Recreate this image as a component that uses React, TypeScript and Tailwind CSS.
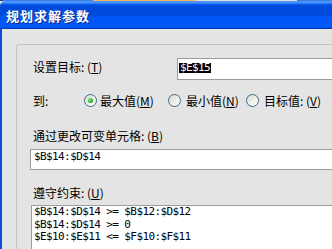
import type { ReactNode } from 'react';

const cjk = "font-['Noto_Sans_CJK_SC','Liberation_Sans',sans-serif] text-[12px] leading-[14px] text-black";
const mono = "font-['DejaVu_Sans_Mono','Liberation_Mono',monospace] text-[11px] tracking-[-0.6px] text-black";

function Key({ k }: { k: string }) {
  return (
    <span>
      (<span className="underline underline-offset-1">{k}</span>)
    </span>
  );
}

function Radio({ checked }: { checked?: boolean }) {
  return (
    <span className="mb-[2px] flex h-[13px] w-[13px] shrink-0 items-center justify-center rounded-full border border-[#3d6a8f] bg-[linear-gradient(135deg,#d6d6d0_0%,#f0f0ec_55%,#ffffff_100%)]">
      {checked && (
        <span className="h-[5px] w-[5px] rounded-full bg-[radial-gradient(circle_at_40%_35%,#8fe88f_0%,#27b927_55%,#1a8a1a_100%)]" />
      )}
    </span>
  );
}

function Label({ children, className = '' }: { children: ReactNode; className?: string }) {
  return <div className={`${cjk} whitespace-nowrap ${className}`}>{children}</div>;
}

const constraints = [
  '$B$14:$D$14 >= $B$12:$D$12',
  '$B$14:$D$14 >= 0',
  '$E$10:$E$11 <= $F$10:$F$11',
];

export default function App() {
  return (
    <div className="flex h-[249px] w-[332px] flex-col overflow-hidden bg-[#e4e4e4]">
      {/* title bar */}
      <div className="flex h-[1px] shrink-0">
        <div className="w-[3px] bg-[#1a3f9a]" />
        <div className="w-[90px] bg-[#3a7ee8]" />
        <div className="w-[102px] bg-[#f2b55c]" />
        <div className="w-[102px] bg-[#dcdcdc]" />
        <div className="flex-1 bg-[#3a7ee8]" />
      </div>
      <div className="flex h-[28px] shrink-0 items-center rounded-tl-[5px] bg-[linear-gradient(to_bottom,#4a93fb_0px,#4a93fb_2px,#0a60f2_3px,#004bdc_5px,#004bdc_14px,#0056f6_16px,#0058fc_26px,#0042cc_27px,#0038b8_28px)] pl-[6px] pt-[2px]">
        <span className="font-['Noto_Sans_CJK_SC',sans-serif] text-[13px] leading-[14px] font-bold tracking-[1px] text-white [text-shadow:1px_1px_0_#0b2a86]">
          规划求解参数
        </span>
      </div>

      {/* body */}
      <div className="flex flex-1">
        <div className="w-[2px] shrink-0 bg-[#0a4ee0]" />
        <div className="flex-1 pl-[14px] pt-[15px]">
          <div className="flex w-[360px] flex-col rounded-tl-[3px] border-l border-t border-[#c4c4c4] pl-[16px]">
            {/* target cell */}
            <div className="mt-[13px] flex items-start">
              <Label className="mt-[2px] w-[144px]">
                设置目标: <Key k="T" />
              </Label>
              <div className="flex h-[22px] flex-1 items-start border border-[#9c9c9c] bg-white pl-[1px] pt-[4px]">
                <span className={`${mono} bg-black px-[1px] leading-[10px] tracking-[-0.2px] text-white`}>$E$15</span>
              </div>
            </div>

            {/* to */}
            <div className="mt-[14px] flex h-[14px] items-center">
              <Label className="w-[51px]">到:</Label>
              <div className="flex w-[84px] items-center gap-[3px]">
                <Radio checked />
                <Label>
                  最大值<Key k="M" />
                </Label>
              </div>
              <div className="flex w-[78px] items-center gap-[5px]">
                <Radio />
                <Label>
                  最小值<Key k="N" />
                </Label>
              </div>
              <div className="flex items-center gap-[5px]">
                <Radio />
                <Label>
                  目标值: <Key k="V" />
                </Label>
              </div>
            </div>

            {/* changing cells */}
            <Label className="mt-[21px]">
              通过更改可变单元格: <Key k="B" />
            </Label>
            <div className="ml-[-3px] mt-[6px] flex h-[21px] items-start border border-[#9c9c9c] bg-white pl-[3px] pt-[1px]">
              <span className={`${mono} leading-[12px]`}>$B$14:$D$14</span>
            </div>

            {/* constraints */}
            <Label className="mt-[16px]">
              遵守约束: <Key k="U" />
            </Label>
            <div className="ml-[-2px] mt-[5px] h-[60px] border border-[#9c9c9c] bg-white pl-[2px]">
              {constraints.map((c) => (
                <div key={c} className={`${mono} whitespace-pre leading-[12.5px]`}>
                  {c}
                </div>
              ))}
            </div>
          </div>
        </div>
      </div>
    </div>
  );
}
